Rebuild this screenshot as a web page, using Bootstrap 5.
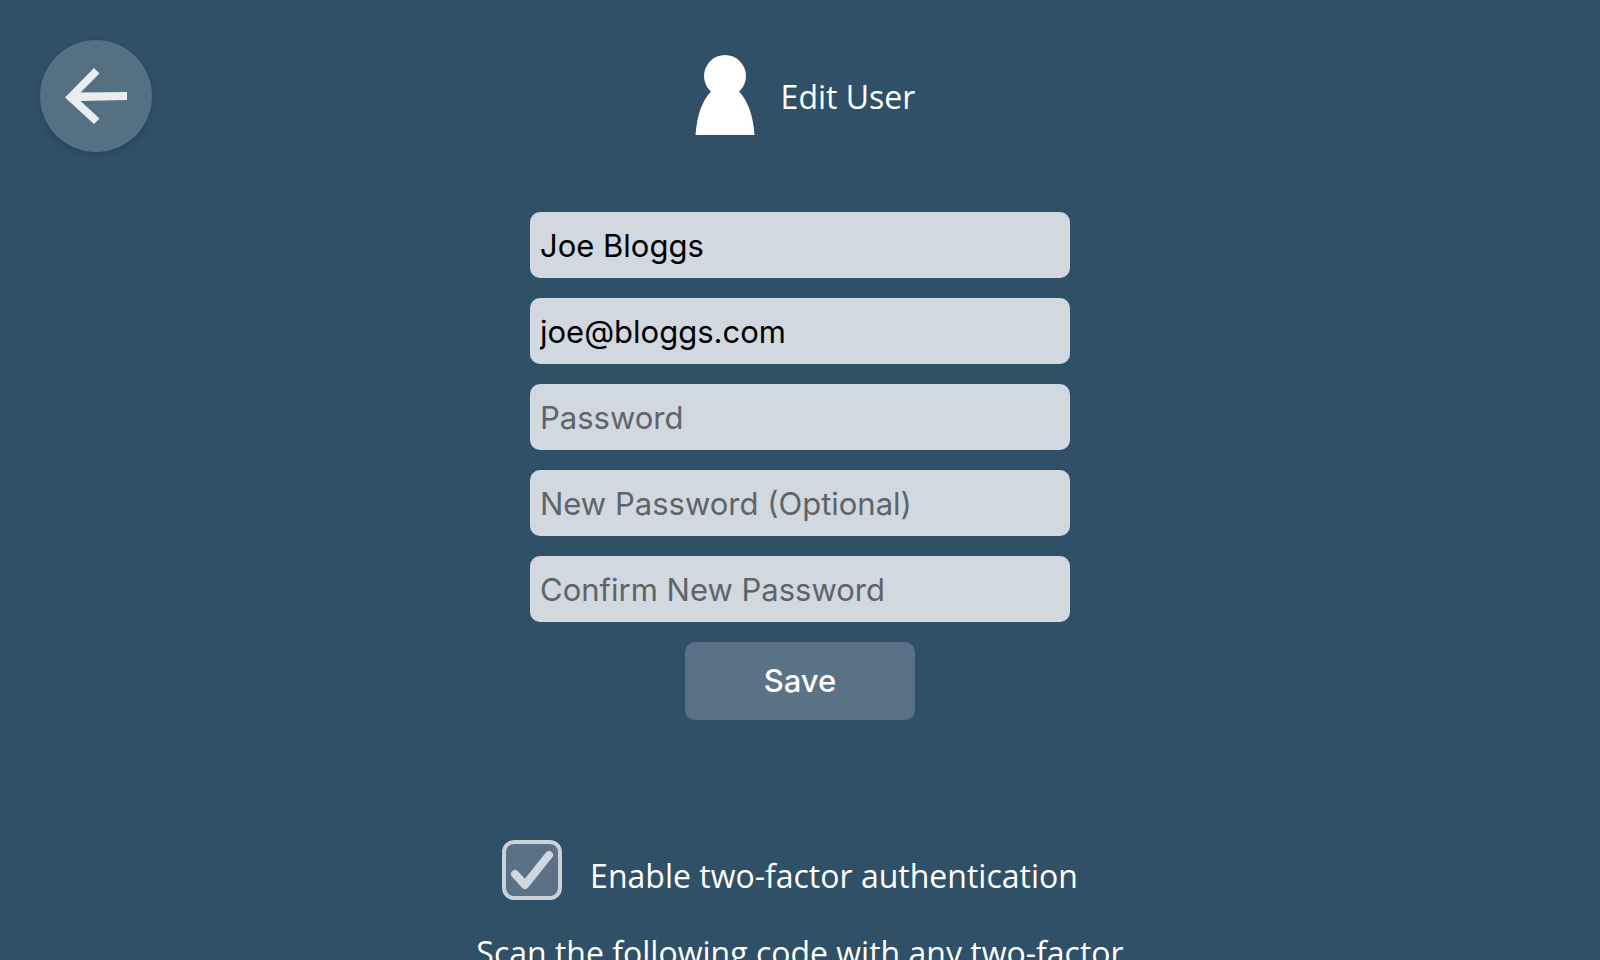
<!DOCTYPE html>
<html lang="en">
<head>
<meta charset="utf-8">
<meta name="viewport" content="width=device-width, initial-scale=1">
<title>Edit User</title>
<link href="https://cdn.jsdelivr.net/npm/bootstrap@5.3.0/dist/css/bootstrap.min.css" rel="stylesheet">
<style>
  body { background: #2f5066; color: #fff; font-family: "Open Sans", "Noto Sans", sans-serif; font-size: 32px; line-height: 44px; }
  .page-scroll { height: 100vh; overflow-y: auto; scrollbar-width: none; }
  .page-scroll::-webkit-scrollbar { display: none; }
  .back-btn { top: 40px; left: 40px; width: 112px; height: 112px; background: #567083; box-shadow: 0 2px 6px rgba(0, 0, 0, .16); }
  .page-head { padding-top: 55px; gap: 16px; }
  .page-head h1 { font-size: 32px; line-height: 44px; font-weight: 400; }
  .user-form { max-width: 540px; margin-top: 77px; gap: 20px; font-family: Inter, "Liberation Sans", sans-serif; }
  .user-form .form-control { height: 66px; padding: 0 10px; border: 0; border-radius: 10px; background: #d1d8df; color: #000; font-size: 31px; }
  .user-form .form-control::placeholder { color: #5f6467; opacity: 1; }
  .save-btn { width: 230px; height: 78px; border: 0; border-radius: 10px; background: #5b7186; color: #fff; font-size: 31px; font-weight: 500; }
  .two-factor { margin-top: 120px; padding-right: 20px; gap: 28px; min-height: 60px; }
  .two-factor .form-check-input { width: 60px; height: 60px; margin: 0; border: 4px solid #c9d1d9; border-radius: 12px; background-color: #5b7186; flex: none; }
  .two-factor .form-check-input:checked { background-color: #5b7186; border-color: #c9d1d9; background-origin: border-box; background-size: 60px 60px; background-position: 0 0;
    background-image: url("data:image/svg+xml,%3Csvg xmlns='http://www.w3.org/2000/svg' viewBox='0 0 60 60'%3E%3Cpath d='M13 34L23 45L47 15' fill='none' stroke='%23d0d7de' stroke-width='8' stroke-linecap='round' stroke-linejoin='round'/%3E%3C/svg%3E"); }
  .two-factor label { padding-top: 12px; }
  .scan-note { max-width: 680px; margin-top: 31px; }
</style>
</head>
<body>
<div class="page-scroll position-relative">
  <button type="button" class="back-btn btn rounded-circle border-0 p-0 position-absolute" aria-label="Back">
    <svg class="d-block" width="112" height="112" viewBox="0 0 112 112" aria-hidden="true">
      <path fill="#e9edf0" d="M25 57.500L54 28L59.500 33.500L40.500 52.500L87 52V60L40.500 61L59.500 78.500L54 84Z"/>
    </svg>
  </button>
  <header class="page-head d-flex justify-content-center align-items-center">
    <svg width="80" height="80" viewBox="0 0 80 80" fill="#fff" aria-hidden="true">
      <circle cx="40" cy="21" r="21"/>
      <path d="M26 36.500C17 46 12 60 10.500 80H69.500C68 60 63 46 54 36.500Z"/>
    </svg>
    <h1 class="m-0 pt-1">Edit User</h1>
  </header>
  <main>
    <form class="user-form d-flex flex-column align-items-center mx-auto">
      <input type="text" class="form-control" value="Joe Bloggs" aria-label="Name">
      <input type="email" class="form-control" value="joe@bloggs.com" aria-label="Email">
      <input type="password" class="form-control" placeholder="Password" aria-label="Password">
      <input type="password" class="form-control" placeholder="New Password (Optional)" aria-label="New Password (Optional)">
      <input type="password" class="form-control" placeholder="Confirm New Password" aria-label="Confirm New Password">
      <button type="submit" class="save-btn btn">Save</button>
    </form>
    <div class="two-factor d-flex justify-content-center align-items-center">
      <input class="form-check-input" type="checkbox" id="twoFactor" checked>
      <label for="twoFactor">Enable two-factor authentication</label>
    </div>
    <p class="scan-note text-center mx-auto mb-0">Scan the following code with any two-factor</p>
  </main>
</div>
<script src="https://cdn.jsdelivr.net/npm/bootstrap@5.3.0/dist/js/bootstrap.bundle.min.js"></script>
</body>
</html>
